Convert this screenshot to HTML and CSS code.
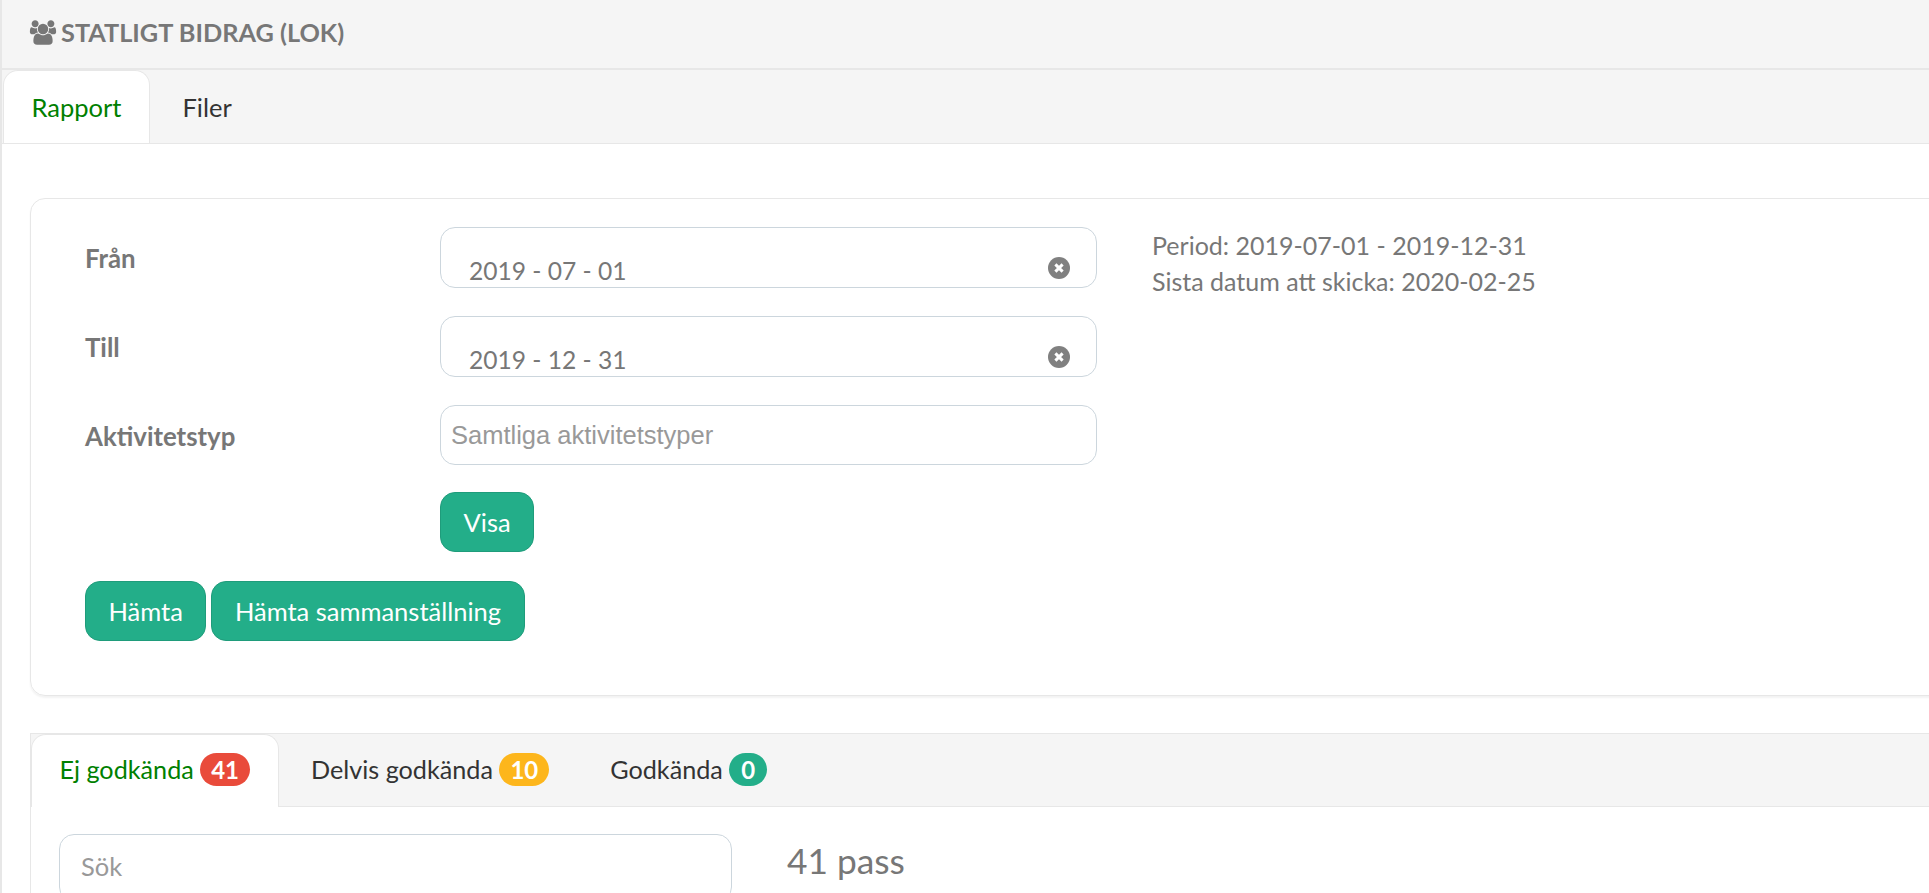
FILE: index.html
```html
<!DOCTYPE html>
<html lang="sv">
<head>
    <meta charset="UTF-8">
    <meta name="viewport" content="width=device-width, initial-scale=1.0">
    <title>Statligt bidrag (LOK)</title>
    <link rel="stylesheet" href="styles.css">
</head>
<body>
    <div class="page">
        <!-- Page title -->
        <div class="page-title">
            <svg class="icon-users" viewBox="0 0 2048 1792" aria-hidden="true">
                <path d="M657 896q-162 5-265 128h-134q-82 0-138-40.5t-56-118.5q0-353 124-353 6 0 43.5 21t97.5 42.5 119 21.5q67 0 133-23-5 37-5 66 0 139 81 256zm1071 637q0 120-73 189.5t-194 69.5h-874q-121 0-194-69.5t-73-189.5q0-53 3.5-103.5t14-109 26.5-108.5 43-97.5 62-81 85.5-53.5 111.5-20q10 0 43 21.5t73 48 107 48 135 21.5 135-21.5 107-48 73-48 43-21.5q61 0 111.5 20t85.5 53.5 62 81 43 97.5 26.5 108.5 14 109 3.5 103.5zm-1024-1277q0 106-75 181t-181 75-181-75-75-181 75-181 181-75 181 75 75 181zm704 384q0 159-112.5 271.5t-271.5 112.5-271.5-112.5-112.5-271.5 112.5-271.5 271.5-112.5 271.5 112.5 112.5 271.5zm576 225q0 78-56 118.5t-138 40.5h-134q-103-123-265-128 81-117 81-256 0-29-5-66 66 23 133 23 59 0 119-21.5t97.5-42.5 43.5-21q124 0 124 353zm-128-609q0 106-75 181t-181 75-181-75-75-181 75-181 181-75 181 75 75 181z"/>
            </svg>
            <h1>STATLIGT BIDRAG (LOK)</h1>
        </div>

        <!-- Main tabs -->
        <div class="tabs tabs-main">
            <a class="tab active">Rapport</a>
            <a class="tab">Filer</a>
        </div>

        <div class="tab-content">
            <!-- Report form -->
            <div class="card">
                <div class="form-area">
                    <div class="form-rows">
                        <div class="form-row">
                            <label>Från</label>
                            <div class="date-field">
                                <input class="input input-date" type="text" value="2019 - 07 - 01">
                                <svg class="icon-clear" viewBox="0 0 22 22" aria-hidden="true">
                                    <circle cx="11" cy="11" r="11"/>
                                    <path d="M7.4 7.4l7.2 7.2M14.6 7.4l-7.2 7.2"/>
                                </svg>
                            </div>
                        </div>
                        <div class="form-row">
                            <label>Till</label>
                            <div class="date-field">
                                <input class="input input-date" type="text" value="2019 - 12 - 31">
                                <svg class="icon-clear" viewBox="0 0 22 22" aria-hidden="true">
                                    <circle cx="11" cy="11" r="11"/>
                                    <path d="M7.4 7.4l7.2 7.2M14.6 7.4l-7.2 7.2"/>
                                </svg>
                            </div>
                        </div>
                        <div class="form-row">
                            <label>Aktivitetstyp</label>
                            <input class="input input-select" type="text" placeholder="Samtliga aktivitetstyper">
                        </div>
                        <div class="form-row form-row-submit">
                            <span></span>
                            <div><button class="btn">Visa</button></div>
                        </div>
                    </div>
                    <p class="period">
                        Period: 2019-07-01 - 2019-12-31<br>
                        Sista datum att skicka: 2020-02-25
                    </p>
                </div>
                <div class="button-row">
                    <button class="btn">Hämta</button>
                    <button class="btn">Hämta sammanställning</button>
                </div>
            </div>

            <!-- Sessions -->
            <div class="sessions">
                <div class="tabs tabs-sub">
                    <a class="tab active">Ej godkända <span class="badge badge-red">41</span></a>
                    <a class="tab">Delvis godkända <span class="badge badge-yellow">10</span></a>
                    <a class="tab">Godkända <span class="badge badge-green">0</span></a>
                </div>
                <div class="sessions-body">
                    <input class="input input-search" type="text" placeholder="Sök">
                    <h2>41 pass</h2>
                </div>
            </div>
        </div>
    </div>
</body>
</html>
```

FILE: styles.css
```css
* {
    margin: 0;
    padding: 0;
    box-sizing: border-box;
}

html, body {
    height: 100%;
    overflow: hidden;
}

body {
    font-family: 'Lato', sans-serif;
    font-size: 25.5px;
    color: #777;
    background: #fff;
}

/* Wider than the window: the right edges of the panels are cut off */
.page {
    width: 2000px;
    border-left: 2px solid #e7e7e7;
}

/* Page title */
.page-title {
    height: 70px;
    display: flex;
    align-items: center;
    gap: 4px;
    padding: 0 0 4px 27px;
    background: #f5f5f5;
    border-bottom: 2px solid #e7e7e7;
}

.page-title h1 {
    font-size: 25.3px;
    font-weight: bold;
    color: #777;
}

.icon-users {
    width: 28px;
    height: 25px;
    fill: #777;
}

/* Tabs */
.tabs {
    display: flex;
    gap: 4px;
    background: #f5f5f5;
    border-bottom: 1px solid #e7e7e7;
}

.tab {
    display: block;
    color: #333;
    border: 1px solid transparent;
    border-bottom: 0;
}

.tab.active {
    color: #008000;
    background: #fff;
    border-color: #e7e7e7;
    border-radius: 15px 15px 0 0;
    margin-bottom: -1px;
}

.tabs-main {
    height: 74px;
    padding: 0 0 0 1px;
}

.tabs-main .tab {
    padding: 21px 27.5px 0;
    height: 73px;
}

.tabs-sub {
    height: 74px;
    border-top: 1px solid #e7e7e7;
}

.tabs-sub .tab {
    padding: 18px 27.5px 0;
    height: 73px;
    font-size: 25.2px;
    white-space: nowrap;
}

.tab-content {
    padding: 54px 0 0 28px;
}

/* Report form */
.card {
    height: 498px;
    padding: 28px 54px 0;
    border: 1px solid #e7e7e7;
    border-radius: 15px;
    box-shadow: 0 2px 2px rgba(0, 0, 0, 0.05);
}

.form-area {
    display: flex;
    gap: 55px;
}

.form-rows {
    display: flex;
    flex-direction: column;
    gap: 28px;
}

.form-row {
    display: grid;
    grid-template-columns: 355px 657px;
}

.form-row-submit {
    margin-top: -1px;
}

.form-row label {
    font-size: 25.8px;
    font-weight: bold;
    padding-top: 16px;
}

.date-field {
    position: relative;
}

.input {
    display: block;
    width: 100%;
    background: #fff;
    border: 1px solid #ccd6dd;
    border-radius: 15px;
    color: #777;
    outline: none;
}

.input::placeholder {
    color: #999;
    opacity: 1;
}

.input-date {
    height: 61px;
    padding: 25px 28px 0;
    font-family: 'Lato', sans-serif;
    font-size: 24.6px;
}

.input-select {
    height: 60px;
    padding: 0 10px;
    font-family: 'Liberation Sans', sans-serif;
    font-size: 25.5px;
}

.icon-clear {
    position: absolute;
    right: 27px;
    top: 30px;
    width: 22px;
    height: 22px;
}

.icon-clear circle {
    fill: #808080;
}

.icon-clear path {
    stroke: #fff;
    stroke-width: 3;
    fill: none;
}

.btn {
    height: 60px;
    padding: 0 22.5px;
    font-family: 'Lato', sans-serif;
    font-size: 25.5px;
    color: #fff;
    background: #23ae89;
    border: 1px solid #1f9c7b;
    border-radius: 15px;
}

.period {
    font-size: 25px;
    line-height: 36px;
}

.button-row {
    display: flex;
    gap: 5px;
    margin-top: 29px;
}

/* Sessions */
.sessions {
    margin-top: 37px;
    border-left: 1px solid #e7e7e7;
}

.badge {
    display: inline-block;
    min-width: 38px;
    height: 33px;
    padding: 0 11px;
    font-size: 24px;
    font-weight: bold;
    line-height: 33px;
    text-align: center;
    color: #fff;
    border-radius: 17px;
    vertical-align: 0;
}

.badge-red { background: #e94b3b; }
.badge-yellow { background: #fdb61c; }
.badge-green { background: #23ae89; }

.sessions-body {
    display: flex;
    gap: 55px;
    padding: 27px 0 0 28px;
}

.input-search {
    width: 673px;
    height: 68px;
    padding: 0 21px 4px;
    font-family: 'Lato', sans-serif;
    font-size: 25.5px;
}

.sessions-body h2 {
    font-size: 35.3px;
    font-weight: normal;
    padding-top: 5px;
}
```
